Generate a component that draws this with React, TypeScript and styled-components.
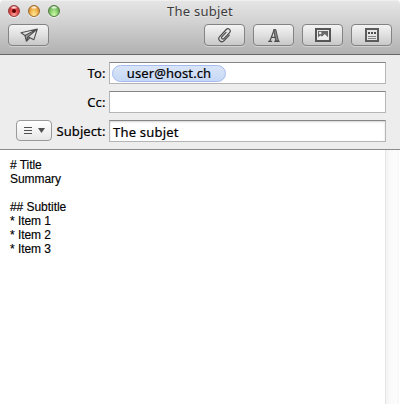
import React from "react";
import styled, { createGlobalStyle } from "styled-components";

const GlobalStyle = createGlobalStyle`
  * { box-sizing: border-box; }
  body { margin: 0; background: #fff; }
`;

const Window = styled.div`
  width: 400px;
  height: 404px;
  display: flex;
  flex-direction: column;
  overflow: hidden;
  background: #fff;
  color: #000;
  font-family: "Noto Sans", "Open Sans", sans-serif;
`;

const Header = styled.header`
  height: 55px;
  flex: none;
  border-bottom: 1px solid #686868;
  border-radius: 4px 4px 0 0;
  background: linear-gradient(#e6e6e6 0, #d2d2d2 22px, #b1b1b1 54px);
  box-shadow: inset 0 1px 0 #efefef;
`;

const TitleBar = styled.div`
  height: 24px;
  display: grid;
  grid-template-columns: 100px 1fr 100px;
  align-items: start;
`;

const Lights = styled.div`
  display: flex;
  gap: 8px;
  padding: 5px 0 0 8px;
`;

const Light = styled.span<{ $rim: string; $top: string; $base: string; $glow: string }>`
  width: 12px;
  height: 12px;
  border-radius: 50%;
  display: grid;
  place-items: center;
  border: 1px solid ${(p) => p.$rim};
  background:
    radial-gradient(ellipse 4px 2px at 50% 14%, #fff 0, rgba(255, 255, 255, 0.2) 80%, transparent 100%),
    radial-gradient(ellipse at 50% 95%, ${(p) => p.$glow} 0, ${(p) => p.$base} 55%, ${(p) => p.$top} 100%);
  box-shadow: 0 1px 0 rgba(255, 255, 255, 0.65);
`;

const UnsavedDot = styled.i`
  width: 4px;
  height: 4px;
  border-radius: 50%;
  background: #5c0000;
`;

const Title = styled.h1`
  margin: 0;
  text-align: center;
  font-size: 13px;
  line-height: 22px;
  font-weight: 400;
  letter-spacing: 0.25px;
  color: #3c3c3c;
  text-shadow: 0 1px 0 rgba(255, 255, 255, 0.4);
`;

const Toolbar = styled.div`
  display: flex;
  justify-content: space-between;
  padding: 0 8px;
`;

const Group = styled.div`
  display: flex;
  gap: 8px;
`;

const ToolButton = styled.button`
  width: 41px;
  height: 22px;
  padding: 0;
  display: grid;
  place-items: center;
  border: 1px solid #838383;
  border-radius: 4px;
  background: linear-gradient(#f4f4f4, #e0e0e0 50%, #c8c8c8);
  box-shadow: 0 1px 0 rgba(255, 255, 255, 0.35);
  color: #4a4a4a;
  svg { display: block; }
`;

const Form = styled.section`
  height: 95px;
  flex: none;
  display: flex;
  flex-direction: column;
  gap: 7px;
  padding: 7px 14px 0 16px;
  background: #ededed;
  border-bottom: 1px solid #8b8b8e;
  -webkit-text-stroke: 0.2px #000;
`;

const Row = styled.div`
  height: 22px;
  display: grid;
  grid-template-columns: 36px 54px 277px;
  justify-content: space-between;
`;

const Label = styled.label`
  white-space: nowrap;
  display: flex;
  justify-content: flex-end;
  grid-column: 2;
  padding-right: 2px;
  font-size: 13px;
  line-height: 22px;
  letter-spacing: 0.1px;
`;

const Field = styled.div<{ $inset?: boolean }>`
  grid-column: 3;
  height: 22px;
  display: flex;
  align-items: center;
  border: 1px solid #b5b5b5;
  border-top-color: #858585;
  background: #fff;
  padding: ${(p) => (p.$inset ? "2px 0 0 3px" : "0 0 0 2px")};
  box-shadow: ${(p) => (p.$inset ? "inset 0 1px 2px #d4d4d4" : "none")};
  font-size: 13px;
  line-height: 18px;
  letter-spacing: 0.2px;
`;

const Token = styled.span`
  width: 114px;
  height: 17px;
  border: 1px solid #a4baf0;
  border-radius: 9px;
  background: linear-gradient(#d9e5f8, #c7d8f4);
  text-align: center;
  line-height: 15px;
  letter-spacing: 0.1px;
`;

const MenuButton = styled.button`
  grid-column: 1;
  width: 36px;
  height: 21px;
  padding: 0;
  display: grid;
  place-items: center;
  border: 1px solid #9a9a9a;
  border-radius: 4px;
  background: linear-gradient(#fff, #f3f3f3 50%, #e7e7e7);
`;

const Editor = styled.main`
  flex: 1;
  display: flex;
  min-height: 0;
`;

const Message = styled.pre`
  flex: 1;
  margin: 0;
  padding: 8px 10px;
  font: 12px/14px "Liberation Sans", Arial, sans-serif;
  letter-spacing: -0.05px;
  -webkit-text-stroke: 0.15px #000;
`;

const ScrollTrack = styled.div`
  width: 15px;
  border-left: 1px solid #e5e5e5;
  border-right: 1px solid #fff;
  background: linear-gradient(90deg, #f3f3f3, #fafafa 35%, #fcfcfc 75%, #f6f6f6);
`;

const SendIcon = () => (
  <svg width="20" height="16" viewBox="0 0 20 16" fill="none" stroke="#505050" strokeLinejoin="round">
    <path d="M6 8.5 18.3 2 9 9.8 7.6 14z" fill="#a0a0a0" stroke="none" />
    <path d="M2 5.8 18.3 2 14.8 12.8 9 9.8 18.3 2 6 8.5z" strokeWidth="1.1" />
    <path d="M6 8.5 7.4 14.2 9 9.8M7.4 14.2 10.8 10.9" strokeWidth="1.2" />
  </svg>
);

const ClipIcon = () => (
  <svg width="16" height="16" viewBox="-8 -8 16 16" fill="none" stroke="#484848" strokeWidth="1.15" strokeLinecap="round">
    <path
      transform="translate(0 .2) rotate(43)"
      d="M3.1-3V4.6A3.05 3.05 0 0 1-3 4.6V-5A2.3 2.3 0 0 1 1.6-5V3.2A1.4 1.4 0 0 1-1.2 3.2V-2.8"
    />
  </svg>
);

const FontIcon = () => (
  <svg width="14" height="15" viewBox="0 0 14 15" fill="none" stroke="#4b4b4b">
    <path d="M6.6 1.5h2.2L11.5 13H8.7z" fill="#858585" strokeWidth=".9" />
    <path d="M7 2.3 2.9 13M4.7 9.3h4M1.2 13.3h3.9M7.2 13.3h5.4" strokeWidth="1.2" />
  </svg>
);

const PhotoIcon = () => (
  <svg width="16" height="14" viewBox="0 0 16 14">
    <path d="M0 0h16v14H0z" fill="#565656" />
    <path d="M2 2h12v10H2z" fill="#e8e8e8" />
    <path d="M3 3h10v8H3z" fill="#696969" />
    <path d="M3 11V9.6L5.3 7.6l1.8 1L9.8 6 13 9.2V11z" fill="#ededed" />
    <circle cx="5.2" cy="5" r="1.3" fill="#ededed" />
  </svg>
);

const StationeryIcon = () => (
  <svg width="14" height="14" viewBox="0 0 14 14" shapeRendering="crispEdges">
    <path d="M0 0h14v14H0z" fill="#5c5c5c" />
    <path d="M2 2h10v10H2z" fill="#e6e6e6" />
    <path d="M3 4h2v2H3zM6 4h2v2H6zM9 4h2v2H9z" fill="#4d4d4d" />
    <path d="M3 8h8v1H3zM3 10h8v1H3z" fill="#838383" />
  </svg>
);

const MenuIcon = () => (
  <svg width="22" height="9" viewBox="0 0 22 9">
    <path d="M1 1h8v1H1zM1 4h8v1H1zM1 7h8v1H1z" fill="#505050" />
    <path d="M15 2h7l-3.5 5z" fill="#505050" />
  </svg>
);

const message = `# Title
Summary

## Subtitle
* Item 1
* Item 2
* Item 3`;

const tools = [
  { name: "Attach", Icon: ClipIcon },
  { name: "Format", Icon: FontIcon },
  { name: "Photos", Icon: PhotoIcon },
  { name: "Stationery", Icon: StationeryIcon },
];

export default function App() {
  return (
    <>
      <GlobalStyle />
      <Window>
        <Header>
          <TitleBar>
            <Lights>
              <Light $rim="#963c3c" $top="#a92d2e" $base="#e34a4b" $glow="#ffaaa0">
                <UnsavedDot />
              </Light>
              <Light $rim="#9c6a32" $top="#b87622" $base="#f0b04a" $glow="#fff09a" />
              <Light $rim="#527b42" $top="#54903e" $base="#86ca6d" $glow="#d5ffae" />
            </Lights>
            <Title>The subjet</Title>
          </TitleBar>
          <Toolbar>
            <ToolButton aria-label="Send">
              <SendIcon />
            </ToolButton>
            <Group>
              {tools.map(({ name, Icon }) => (
                <ToolButton key={name} aria-label={name}>
                  <Icon />
                </ToolButton>
              ))}
            </Group>
          </Toolbar>
        </Header>
        <Form>
          <Row>
            <Label>To:</Label>
            <Field>
              <Token>user@host.ch</Token>
            </Field>
          </Row>
          <Row>
            <Label>Cc:</Label>
            <Field />
          </Row>
          <Row>
            <MenuButton aria-label="Header options">
              <MenuIcon />
            </MenuButton>
            <Label>Subject:</Label>
            <Field $inset>The subjet</Field>
          </Row>
        </Form>
        <Editor>
          <Message>{message}</Message>
          <ScrollTrack />
        </Editor>
      </Window>
    </>
  );
}
